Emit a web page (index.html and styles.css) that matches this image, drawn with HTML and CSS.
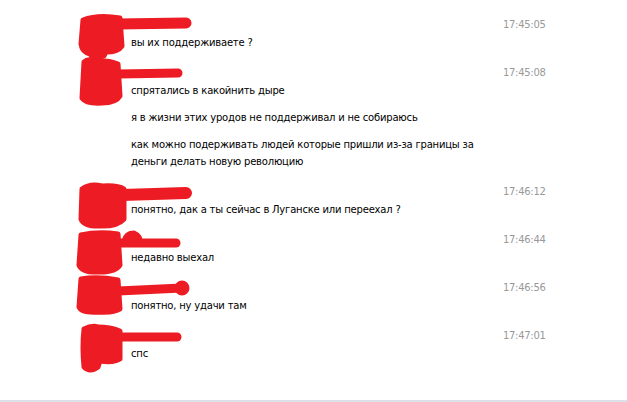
FILE: index.html
```html
<!DOCTYPE html>
<html lang="ru">
<head>
<meta charset="utf-8">
<title>Диалог</title>
<link rel="stylesheet" href="styles.css">
</head>
<body>
<div class="chat">
  <div class="block">
    <div class="ava">
      <svg class="scribble" width="120" height="50" viewBox="0 0 120 50">
        <path class="fill" d="M5 4 Q20 -2 42 2 L44 30 Q40 36 28 36 L26 40 Q15 44 12 38 Q4 36 3 28 Z"/>
        <path class="line" stroke-width="11" d="M40 8 L108 7"/>
      </svg>
    </div>
    <div class="body">
      <div class="name"></div>
      <div class="text">вы их поддерживаете ?</div>
    </div>
    <div class="time">17:45:05</div>
  </div>

  <div class="block">
    <div class="ava">
      <svg class="scribble" width="120" height="50" viewBox="0 0 120 50">
        <path class="fill" d="M6 -2 Q10 -6 16 -3 Q30 -4 40 0 L42 32 Q38 39 24 39 Q8 40 4 34 Z"/>
        <path class="line" stroke-width="9" d="M40 10 L100 9"/>
      </svg>
    </div>
    <div class="body">
      <div class="name"></div>
      <div class="text">спрятались в какойнить дыре</div>
      <div class="text">я в жизни этих уродов не поддерживал и не собираюсь</div>
      <div class="text">как можно подерживать людей которые пришли из-за границы за деньги делать новую революцию</div>
    </div>
    <div class="time">17:45:08</div>
  </div>

  <div class="block">
    <div class="ava">
      <svg class="scribble" width="120" height="50" viewBox="0 0 120 50">
        <path class="fill" d="M4 6 Q12 0 24 3 Q40 2 46 6 L46 36 Q40 43 24 43 Q6 44 3 36 Z"/>
        <path class="line" stroke-width="12" d="M44 12 L108 10"/>
      </svg>
    </div>
    <div class="body">
      <div class="name"></div>
      <div class="text">понятно, дак а ты сейчас в Луганске или переехал ?</div>
    </div>
    <div class="time">17:46:12</div>
  </div>

  <div class="block">
    <div class="ava">
      <svg class="scribble" width="120" height="50" viewBox="0 0 120 50">
        <path class="fill" d="M3 4 Q20 0 40 3 L42 34 Q38 41 22 41 Q4 42 1 34 Z"/>
        <path class="fill" d="M46 10 Q48 2 56 2 Q63 5 62 12 Z"/>
        <path class="line" stroke-width="9" d="M40 12 L98 12"/>
      </svg>
    </div>
    <div class="body">
      <div class="name"></div>
      <div class="text">недавно выехал</div>
    </div>
    <div class="time">17:46:44</div>
  </div>

  <div class="block">
    <div class="ava">
      <svg class="scribble" width="120" height="50" viewBox="0 0 120 50">
        <path class="fill" d="M3 0 Q20 -3 40 1 L42 30 Q36 34 20 33 Q3 34 1 28 Z"/>
        <path class="line" stroke-width="9" d="M40 12 L104 9"/>
        <circle class="fill" cx="104" cy="9" r="5"/>
      </svg>
    </div>
    <div class="body">
      <div class="name"></div>
      <div class="text">понятно, ну удачи там</div>
    </div>
    <div class="time">17:46:56</div>
  </div>

  <div class="block">
    <div class="ava">
      <svg class="scribble" width="120" height="50" viewBox="0 0 120 50">
        <path class="fill" d="M6 2 Q14 -2 20 0 Q32 0 42 4 L42 32 Q36 36 22 34 L20 40 Q12 46 6 40 Q4 20 6 2 Z"/>
        <path class="line" stroke-width="9" d="M40 10 L99 10"/>
      </svg>
    </div>
    <div class="body">
      <div class="name"></div>
      <div class="text">спс</div>
    </div>
    <div class="time">17:47:01</div>
  </div>
</div>
<div class="footer"></div>
</body>
</html>
```
FILE: styles.css
```css
html, body {
  margin: 0;
  padding: 0;
  background: #ffffff;
}

body {
  font-family: "DejaVu Sans", Tahoma, sans-serif;
  font-size: 10px;
  color: #000000;
  overflow: hidden;
}

.chat {
  height: 400px;
  box-sizing: border-box;
  padding: 16px 0 0 78px;
}

.block {
  display: grid;
  grid-template-columns: 53px 371px 80px;
  margin-bottom: 13px;
}

.ava {
  position: relative;
}

.scribble {
  position: absolute;
  left: 0;
  top: 0;
  overflow: visible;
}

.scribble .fill {
  fill: #ed1c24;
  stroke: #ed1c24;
  stroke-width: 5;
  stroke-linejoin: round;
}

.scribble .line {
  fill: none;
  stroke: #ed1c24;
  stroke-linecap: round;
}

.name {
  height: 18px;
}

.text {
  line-height: 17px;
  letter-spacing: -0.2px;
}

.text + .text {
  margin-top: 10px;
}

.time {
  color: #999999;
  line-height: 18px;
  padding-left: 1px;
  letter-spacing: -0.3px;
}

.footer {
  height: 2px;
  background: #dae1e8;
}
```
